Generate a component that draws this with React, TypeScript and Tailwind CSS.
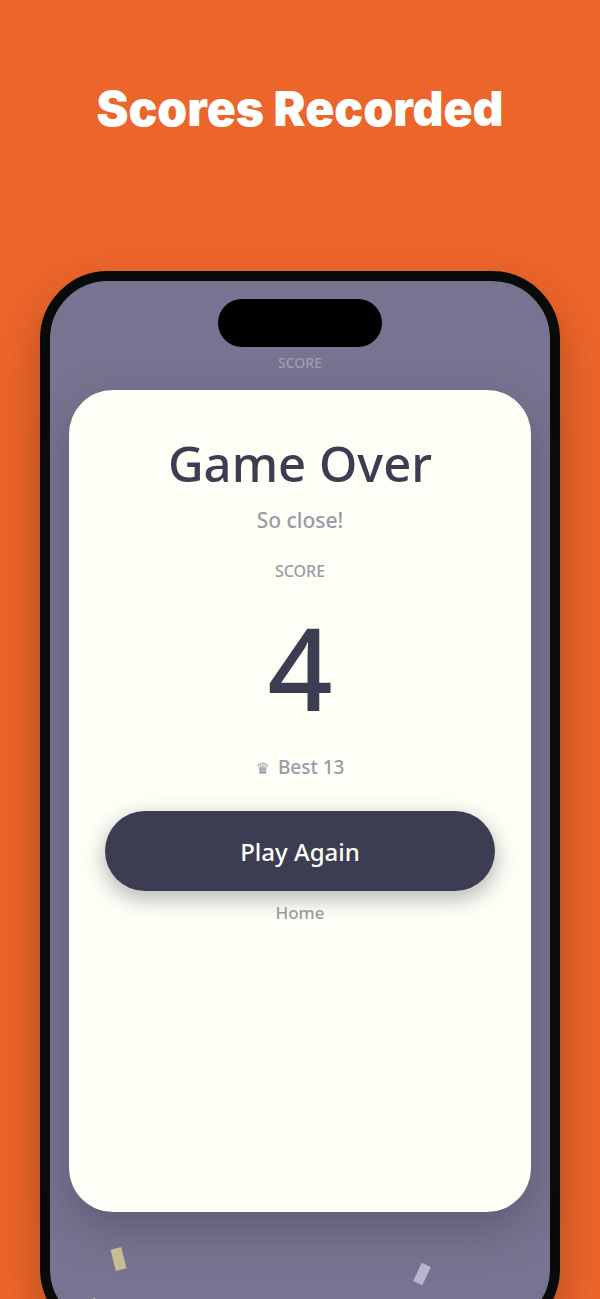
import { clsx } from "clsx";

const confetti = [
  { key: "gold", className: "left-[63px] top-[967px] h-[22px] w-[11px] -rotate-[14deg] bg-[#c7bb94]" },
  { key: "lilac", className: "left-[367px] top-[983px] h-[20px] w-[10px] rotate-[25deg] bg-[#b9b3cf]" },
  { key: "silver", className: "left-[38px] top-[1018px] h-[20px] w-[10px] rotate-[30deg] bg-[#b5b8b9]" },
];

function ScoreCard({ score, best }: { score: number; best: number }) {
  return (
    <section className="relative mx-[19px] flex h-[822px] flex-col items-center rounded-[44px] bg-[#fdfef6] px-9 pt-10 shadow-[0_16px_44px_rgba(60,55,75,0.4)]">
      <h2 className="text-[49px] leading-[66px] font-medium text-[#3c3c52]">
        Game Over
      </h2>
      <p className="mt-[10px] text-[21px] leading-7 font-medium text-[#9a9ba5]">
        So close!
      </p>
      <p className="mt-[25px] text-[16px] leading-6 font-medium text-[#9a9ba5]">
        SCORE
      </p>
      <p className="mt-2 text-[114px] leading-[152px] font-medium text-[#3c3c52]">
        {score}
      </p>
      <p className="mt-[10px] flex items-baseline gap-2 text-[19px] leading-7 font-medium text-[#9a9ba5]">
        <span className="font-['DejaVu_Sans'] text-[16px]">♛</span>
        <span>Best {best}</span>
      </p>
      <button
        type="button"
        className="mt-7 h-20 w-full rounded-full bg-[#3c3d53] pt-[2px] text-[24px] font-medium text-[#fdfef6] shadow-[0_7px_18px_3px_rgba(60,60,65,0.3)]"
      >
        Play Again
      </button>
      <button
        type="button"
        className="relative mt-2 text-[17px] leading-7 font-medium text-[#9a9b9f]"
      >
        Home
      </button>
    </section>
  );
}

export default function App() {
  return (
    <main className="h-screen overflow-hidden bg-[#ec652b] font-['Noto_Sans','Open_Sans',sans-serif]">
      <h1 className="pt-[81px] text-center font-['Inter',sans-serif] text-[48px] leading-14 font-black text-white">
        Scores Recorded
      </h1>
      <div className="relative mx-10 mt-[134px] h-[1066px] rounded-[68px] border-[10px] border-[#090b0a] bg-[#777491] shadow-[0_20px_40px_rgba(60,30,10,0.32)]">
        <div className="mx-auto mt-[18px] h-12 w-[164px] rounded-full bg-black" />
        <p className="mt-1 mb-[15px] text-center text-[14px] leading-6 font-medium text-[#a19fb1]">
          SCORE
        </p>
        <ScoreCard score={4} best={13} />
        {confetti.map((piece) => (
          <span key={piece.key} className={clsx("absolute", piece.className)} />
        ))}
      </div>
    </main>
  );
}
